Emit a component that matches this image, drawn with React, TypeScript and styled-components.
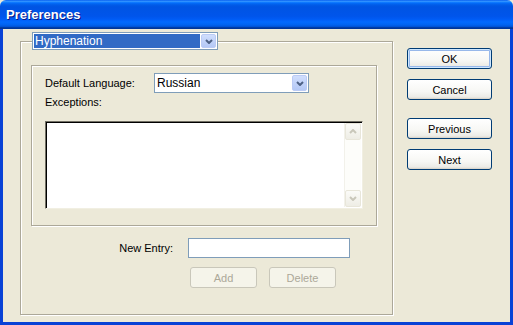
import styled, { createGlobalStyle } from "styled-components";

const GlobalStyle = createGlobalStyle`
    body {
        margin: 0;
        font-family: "Liberation Sans", Arial, sans-serif;
        font-size: 11px;
        color: #000;
    }
    * {
        box-sizing: border-box;
    }
`;

function Chevron({ up = false, color = "#4d6185" }: { up?: boolean; color?: string }) {
    return (
        <svg width="8" height="5" viewBox="0 0 8 5">
            <path
                d={up ? "M1 4 L4 1 L7 4" : "M1 1 L4 4 L7 1"}
                fill="none"
                stroke={color}
                strokeWidth="2"
            />
        </svg>
    );
}

interface ComboProps {
    value: string;
    width: number;
    height: number;
    selected?: boolean;
}

function Combo({ value, width, height, selected }: ComboProps) {
    return (
        <ComboBox style={{ width, height }}>
            <ComboText $selected={selected}>{value}</ComboText>
            <ArrowButton>
                <Chevron />
            </ArrowButton>
        </ComboBox>
    );
}

function App() {
    return (
        <Window>
            <GlobalStyle />
            <TitleBar>Preferences</TitleBar>
            <Body>
                <GroupBox>
                    <Legend>
                        <Combo value="Hyphenation" width={186} height={18} selected />
                    </Legend>
                    <InnerBox>
                        <LangRow>
                            <Label>Default Language:</Label>
                            <Combo value="Russian" width={155} height={20} />
                        </LangRow>
                        <Label>Exceptions:</Label>
                        <ListBox>
                            <ListArea />
                            <ScrollBar>
                                <ScrollButton>
                                    <Chevron up color="#c9c7ba" />
                                </ScrollButton>
                                <ScrollButton>
                                    <Chevron color="#c9c7ba" />
                                </ScrollButton>
                            </ScrollBar>
                        </ListBox>
                    </InnerBox>
                    <EntryGrid>
                        <EntryLabel>New Entry:</EntryLabel>
                        <TextInput />
                        <span />
                        <EntryButtons>
                            <DisabledButton>Add</DisabledButton>
                            <DisabledButton>Delete</DisabledButton>
                        </EntryButtons>
                    </EntryGrid>
                </GroupBox>
                <ButtonColumn>
                    <PushButton $default>OK</PushButton>
                    <PushButton>Cancel</PushButton>
                    <PushButton $gap={18}>Previous</PushButton>
                    <PushButton>Next</PushButton>
                </ButtonColumn>
            </Body>
        </Window>
    );
}

const Window = styled.div`
    width: 513px;
    height: 325px;
    display: flex;
    flex-direction: column;
    background: #ece9d8;
`;

const TitleBar = styled.div`
    height: 29px;
    flex: none;
    display: flex;
    align-items: center;
    padding-left: 6px;
    padding-bottom: 1px;
    color: #fff;
    font-size: 13px;
    font-weight: bold;
    text-shadow: 1px 1px #0a1883;
    border-radius: 6px 6px 0 0;
    background: linear-gradient(
        to bottom,
        #0058ee 0%,
        #3593ff 4%,
        #288eff 6%,
        #127dff 8%,
        #036ffc 10%,
        #0262ee 14%,
        #0057e5 20%,
        #0054e3 24%,
        #0055eb 56%,
        #005bf5 66%,
        #026afe 76%,
        #0062ef 86%,
        #0052d6 92%,
        #0040ab 94%,
        #003092 100%
    );
`;

const Body = styled.div`
    flex: 1;
    display: flex;
    align-items: flex-start;
    padding: 3px 0 0 17px;
    border: 3px solid #0842d6;
    border-top: none;
`;

const GroupBox = styled.fieldset`
    width: 373px;
    height: 283px;
    margin: 0;
    padding: 0 15px 0 10px;
    border: 1px solid #aca899;
    box-shadow: inset 1px 1px #fff, 1px 1px #fff;
`;

const Legend = styled.legend`
    padding: 0;
    margin-left: 1px;
`;

const ComboBox = styled.div`
    display: flex;
    align-items: stretch;
    padding: 1px;
    background: #fff;
    border: 1px solid #7f9db9;
`;

const ComboText = styled.div<{ $selected?: boolean }>`
    flex: 1;
    display: flex;
    align-items: center;
    padding-left: 1px;
    margin-right: 1px;
    font-size: 12px;
    background: ${(p) => (p.$selected ? "#316ac5" : "#fff")};
    color: ${(p) => (p.$selected ? "#fff" : "#000")};
`;

const ArrowButton = styled.div`
    width: 15px;
    display: flex;
    align-items: center;
    justify-content: center;
    border: 1px solid #bbcbf5;
    border-radius: 2px;
    background: linear-gradient(to bottom, #d0defd, #b4c8f6);
`;

const InnerBox = styled.div`
    margin-top: 15px;
    height: 161px;
    padding: 7px 13px 0;
    display: flex;
    flex-direction: column;
    border: 1px solid #aca899;
    box-shadow: inset 1px 1px #fff, 1px 1px #fff;
`;

const LangRow = styled.div`
    display: flex;
    align-items: center;
    margin-bottom: 3px;
`;

const Label = styled.span`
    width: 109px;
    line-height: 13px;
`;

const ListBox = styled.div`
    margin-top: 12px;
    width: 318px;
    height: 88px;
    display: flex;
    background: #fff;
    border: 1px solid;
    border-color: #716f64 #f1efe2 #f1efe2 #716f64;
    box-shadow: inset 1px 1px #000, inset -1px -1px #fff;
`;

const ListArea = styled.div`
    flex: 1;
`;

const ScrollBar = styled.div`
    width: 17px;
    margin: 1px 1px 1px 0;
    display: flex;
    flex-direction: column;
    justify-content: space-between;
    background: #fdfdfa;
    border-left: 1px solid #f2f1ea;
`;

const ScrollButton = styled.div`
    height: 17px;
    display: flex;
    align-items: center;
    justify-content: center;
    border: 1px solid #e8e6da;
    border-radius: 2px;
    background: linear-gradient(to bottom, #fbfbf8, #eeede5);
`;

const EntryGrid = styled.div`
    margin-top: 12px;
    display: grid;
    grid-template-columns: 142px 162px;
    column-gap: 15px;
    row-gap: 9px;
    align-items: center;
`;

const EntryLabel = styled.span`
    justify-self: end;
`;

const TextInput = styled.div`
    height: 20px;
    background: #fff;
    border: 1px solid #7f9db9;
`;

const EntryButtons = styled.div`
    display: flex;
    gap: 12px;
    padding-left: 2px;
`;

const DisabledButton = styled.div`
    width: 67px;
    height: 21px;
    display: flex;
    align-items: center;
    justify-content: center;
    color: #aca899;
    background: #f5f4ea;
    border: 1px solid #c9c7ba;
    border-radius: 3px;
`;

const ButtonColumn = styled.div`
    margin: 16px 0 0 14px;
    display: flex;
    flex-direction: column;
`;

const PushButton = styled.div<{ $default?: boolean; $gap?: number }>`
    width: 85px;
    height: 21px;
    margin-top: ${(p) => (p.$gap ?? 10)}px;
    &:first-child {
        margin-top: 0;
    }
    display: flex;
    align-items: center;
    justify-content: center;
    border: 1px solid #003c74;
    border-radius: 3px;
    background: linear-gradient(to bottom, #ffffff 0%, #f7f7f4 60%, #ecebe6 90%, #d6d0c5 100%);
    box-shadow: ${(p) =>
        p.$default ? "inset 0 0 0 1px #cee7ff, inset 0 0 0 2px #98b8ea" : "none"};
`;

export default App;
